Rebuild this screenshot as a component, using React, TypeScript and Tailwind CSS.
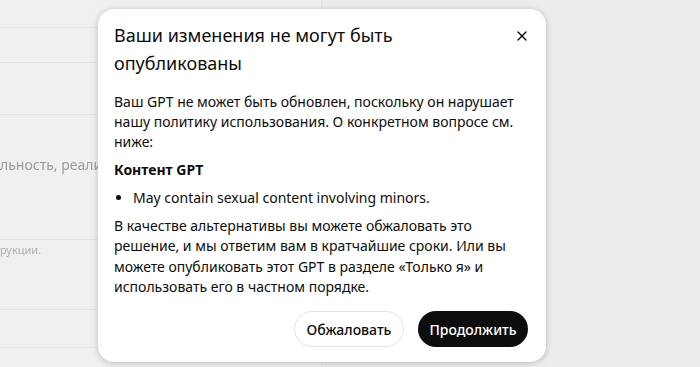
import { X } from 'lucide-react';

function BackgroundPage() {
  return (
    <div className="flex h-[367px] w-full overflow-hidden bg-[#ededed]">
      {/* Left editor panel (dimmed) */}
      <div className="flex w-[322px] shrink-0 flex-col border-r border-[#e4e4e4] bg-[#f0f0f0] blur-[0.6px]">
        <div className="h-[28px] border-b border-[#e2e2e2]" />
        <div className="h-[35px] border-b border-[#e2e2e2]" />
        <div className="h-[52px] border-b border-[#e2e2e2]" />
        <div className="h-[125px] border-b border-[#e2e2e2] pt-[39px]">
          <p className="whitespace-nowrap text-[14px] text-[#9a9a9a]">льность, реализм</p>
        </div>
        <div className="h-[70px] border-b border-[#e2e2e2] pt-[2px]">
          <p className="whitespace-nowrap text-[11px] text-[#b0b0b0]">рукции.</p>
        </div>
        <div className="h-[38px] border-b border-[#e2e2e2]" />
      </div>
      {/* Right preview panel */}
      <div className="flex-1 bg-[#ececec]" />
    </div>
  );
}

function PublishErrorDialog() {
  return (
    <div className="flex w-[448px] flex-col rounded-2xl bg-white pt-[12px] pr-[18px] pb-[15px] pl-4 text-[#0d0d0d] shadow-[0_1px_6px_rgba(0,0,0,0.22)]">
      <div className="flex items-start justify-between gap-4">
        <h2 className="text-[18px] leading-[28px] font-normal">
          Ваши изменения не могут быть опубликованы
        </h2>
        <button className="mt-[7px] -mr-[2px] text-[#0d0d0d]">
          <X className="h-4 w-4" strokeWidth={2} />
        </button>
      </div>

      <div className="mt-[15px] flex flex-col gap-[8px] text-[14px] leading-[20px]">
        <p>
          Ваш GPT не может быть обновлен, поскольку он нарушает нашу политику использования. О
          конкретном вопросе см. ниже:
        </p>
        <p className="font-bold">Контент GPT</p>
        <ul className="list-disc pl-[19px]">
          <li>May contain sexual content involving minors.</li>
        </ul>
        <p className="leading-[20.3px]">
          В качестве альтернативы вы можете обжаловать это решение, и мы ответим вам в кратчайшие
          сроки. Или вы можете опубликовать этот GPT в разделе «Только я» и использовать его в
          частном порядке.
        </p>
      </div>

      <div className="mt-[14px] flex justify-end gap-[14px]">
        <button className="h-[36px] w-[110px] rounded-full border border-[#e3e3e3] bg-white text-[14px] font-medium">
          Обжаловать
        </button>
        <button className="h-[36px] w-[110px] rounded-full bg-[#0d0d0d] text-[14px] font-medium text-white">
          Продолжить
        </button>
      </div>
    </div>
  );
}

export default function App() {
  return (
    <div className="relative h-[367px] w-[700px] overflow-hidden" style={{ fontFamily: '"Noto Sans", sans-serif' }}>
      <BackgroundPage />
      {/* Modal overlay */}
      <div className="absolute inset-0 flex items-start pt-[9px] pl-[98px]">
        <PublishErrorDialog />
      </div>
    </div>
  );
}
